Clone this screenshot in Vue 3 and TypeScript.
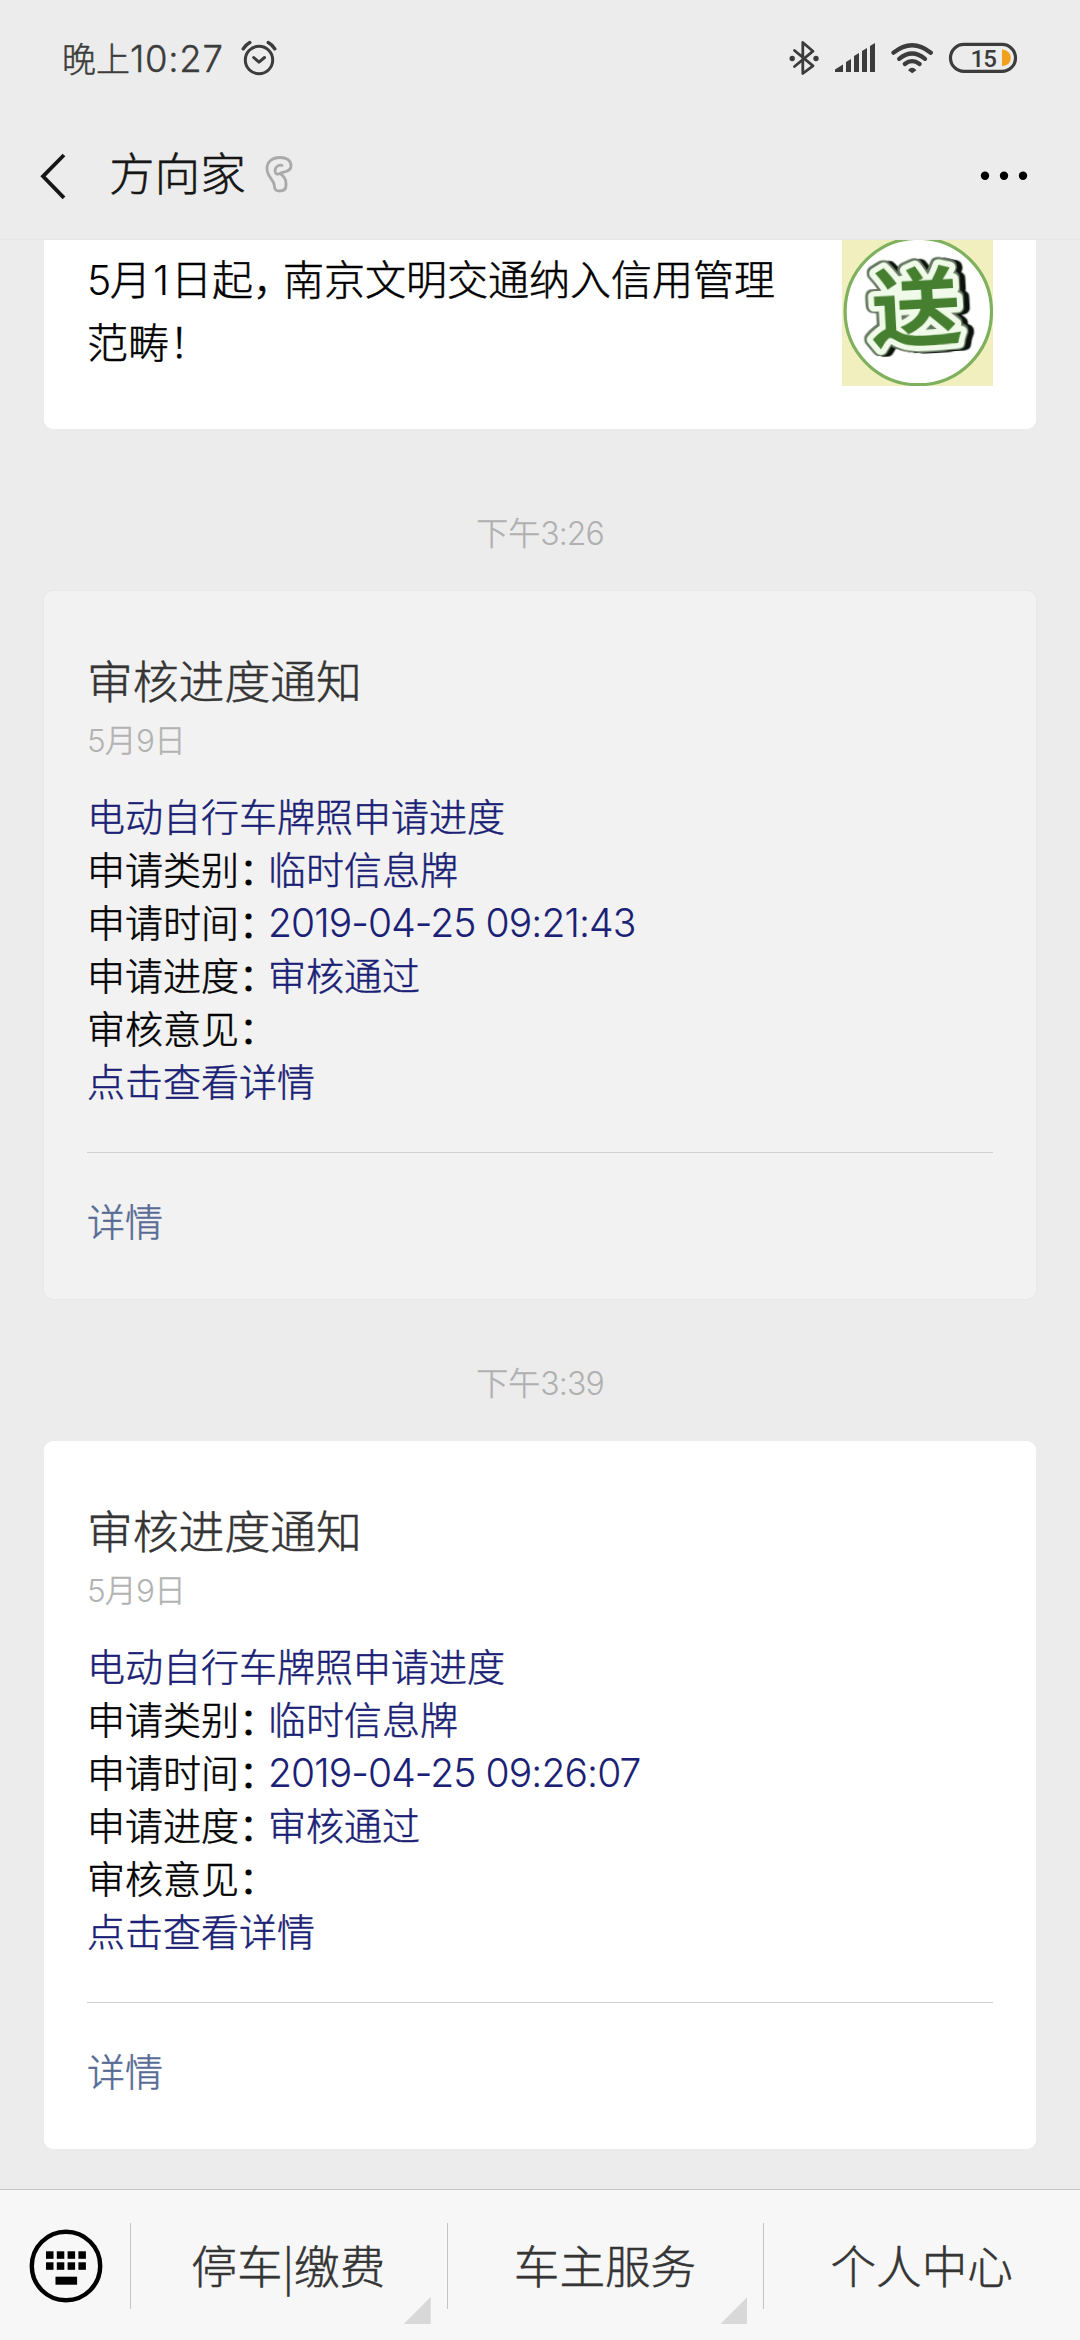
<script setup lang="ts">
interface Field {
  label: string
  value: string
  spacing?: boolean
}
interface Notice {
  time: string
  read: boolean
  title: string
  heading: string
  fields: Field[]
}

function makeNotice(time: string, read: boolean, applied: string): Notice {
  return {
    time,
    read,
    title: '审核进度通知',
    heading: '电动自行车牌照申请进度',
    fields: [
      { label: '申请类别', value: '临时信息牌' },
      { label: '申请时间', value: applied, spacing: true },
      { label: '申请进度', value: '审核通过' },
      { label: '审核意见', value: '' },
    ],
  }
}

const notices: Notice[] = [
  makeNotice('3:26', true, '2019-04-25 09:21:43'),
  makeNotice('3:39', false, '2019-04-25 09:26:07'),
]

const menus = [
  { label: '停车|缴费', sub: true },
  { label: '车主服务', sub: true },
  { label: '个人中心', sub: false },
]

const keyColumns = [45.5, 56.3, 67.1, 77.9]
</script>

<template>
  <div class="screen">
    <header class="top">
      <div class="status">
        <span class="clock">晚上<span class="num clock-digits">10:27</span></span>
        <svg class="alarm" width="36" height="36" viewBox="241 40 36 36" fill="none" stroke="#3c3c3c" stroke-width="3" stroke-linecap="round">
          <circle cx="259" cy="60" r="13.7" />
          <path d="M253.7 57.5L259 62.2L264.5 57.5" stroke-linejoin="round" />
          <path d="M243.2 48.8Q245.5 45 249.8 42.6M274.8 48.8Q272.5 45 268.2 42.6" stroke-width="3.4" />
        </svg>
        <span class="grow"></span>
        <svg width="230" height="40" viewBox="788 38 230 40" fill="none" stroke="#3c3c3c" stroke-linecap="round" stroke-linejoin="round">
          <path d="M794.5 50.5L813 65.8L802.8 73.5V42.5L813 51.2L794.5 66.5" stroke-width="2.8" />
          <circle cx="792.2" cy="58.5" r="2.7" fill="#3c3c3c" stroke="none" />
          <circle cx="816" cy="58.5" r="2.7" fill="#3c3c3c" stroke="none" />
          <g fill="#3c3c3c" stroke="none">
            <path d="M835 72V69.5L843 64.5V72Z" />
            <path d="M846 72V62L851 59V72Z" />
            <path d="M854 72V56L859 53V72Z" />
            <path d="M862 72V51L867 48V72Z" />
            <path d="M870 72V46L875 43V72Z" />
          </g>
          <g stroke-width="4.3">
            <path d="M893.5 52.7Q912 37.8 930.8 52.7" />
            <path d="M899.2 58.8Q912 48.2 925 58.8" />
            <path d="M904.8 64Q912 58.2 919.6 64" />
          </g>
          <path d="M908 70.2Q912 65.4 916.4 70.2L912.2 73.2Z" fill="#3c3c3c" stroke="none" />
          <rect x="950.5" y="44.4" width="65" height="27" rx="13.5" stroke-width="3.2" />
          <path d="M1002 49.3Q1010.8 51 1010.8 58Q1010.8 65 1002 66.2Z" fill="#f0a21d" stroke="none" />
          <text class="level" x="970.5" y="66.6">15</text>
        </svg>
      </div>
      <div class="nav">
        <svg width="30" height="50" viewBox="38 150 30 50" fill="none" stroke="#161616" stroke-width="3.8">
          <path d="M64 154L43 175.3L64 196.8" />
        </svg>
        <h1>方向家</h1>
        <svg class="ear" width="30" height="40" viewBox="264 154 30 40" fill="none" stroke="#a9a9a9" stroke-width="2.8" stroke-linecap="round" stroke-linejoin="round">
          <path d="M282 165.3C278 164.6 274.8 167.3 275 171C275.2 174 277.5 175 280 173.4C283 171.5 291 172.2 291 166C291 160 286 157.5 280 157.5C272 157.5 267 162 267 168.5C267 177 273.5 179 274.2 185C274.5 189 275 191 279.5 191C284 191 286 189.5 286 185.5C286 181.5 286.3 180 284.3 177.8C283.2 176.2 281.5 174.6 280 173.4" />
        </svg>
        <span class="grow"></span>
        <svg width="50" height="20" viewBox="979 167 50 20" fill="#000">
          <circle cx="985" cy="176.8" r="4.2" />
          <circle cx="1004" cy="176.8" r="4.2" />
          <circle cx="1023" cy="176.8" r="4.2" />
        </svg>
      </div>
    </header>

    <main>
      <section class="article">
        <p><span class="num five">5</span>月<span class="num one">1</span>日起<span class="comma">，</span>南京文明交通纳入信用管理<br />范畴！</p>
        <svg width="151" height="146" viewBox="842 240 151 146">
          <rect x="842" y="240" width="151" height="146" fill="#f0efbd" />
          <circle cx="918.3" cy="311.5" r="73.2" fill="#fff" stroke="#7fb05e" stroke-width="3.2" />
          <g transform="translate(916 306) rotate(-3) scale(1.08 1.02)">
            <text class="gift" x="0" y="32">送</text>
          </g>
        </svg>
      </section>

      <template v-for="n in notices" :key="n.time">
        <div class="time">下午<span class="num time-digits">{{ n.time }}</span></div>
        <section class="card" :class="{ read: n.read }">
          <h2>{{ n.title }}</h2>
          <div class="date"><span class="num">5</span>月<span class="num">9</span>日</div>
          <div class="body">
            <div class="blue">{{ n.heading }}</div>
            <div v-for="f in n.fields" :key="f.label" class="field">
              <span>{{ f.label }}</span><span class="colon">：</span><span class="blue"><span :class="{ num: f.spacing, digits: f.spacing }">{{ f.value }}</span></span>
            </div>
            <div class="blue">点击查看详情</div>
          </div>
          <div class="more">详情</div>
        </section>
      </template>
    </main>

    <footer>
      <div class="keyboard">
        <svg width="76" height="76" viewBox="27.5 27.5 76 76">
          <circle cx="65.5" cy="65.5" r="34.2" fill="none" stroke="#000" stroke-width="4.4" />
          <g v-for="x in keyColumns" :key="x">
            <rect :x="x" y="50.8" width="7.5" height="7.5" />
            <rect :x="x" y="61.8" width="7.5" height="7.5" />
          </g>
          <rect x="55" y="76.2" width="21.6" height="8" />
        </svg>
      </div>
      <div v-for="m in menus" :key="m.label" class="menu">
        <span>{{ m.label }}</span>
        <i v-if="m.sub" class="corner"></i>
      </div>
    </footer>
  </div>
</template>

<style>
body {
  margin: 0;
  background: #ececec;
}
</style>

<style scoped>
.screen {
  width: 1080px;
  height: 2340px;
  display: flex;
  flex-direction: column;
  overflow: hidden;
  background: #ececec;
  color: #000;
  font-family: 'Noto Sans CJK SC', sans-serif;
  font-weight: 300;
  -webkit-text-stroke-width: 0.5px;
  white-space: nowrap;
}
svg {
  display: block;
  flex: none;
}
.grow {
  flex: 1;
}
.num {
  font-family: Inter, 'Noto Sans CJK SC', sans-serif;
  line-height: 1;
  -webkit-text-stroke-width: 0;
}
.top {
  height: 240px;
  flex: none;
  box-sizing: border-box;
  border-bottom: 1px solid #e6e6e6;
}
.status {
  height: 116px;
  box-sizing: border-box;
  display: flex;
  align-items: center;
  padding: 0 62px;
  color: #3c3c3c;
}
.clock {
  font-size: 34px;
  line-height: 50px;
  width: 179px;
}
.clock-digits {
  font-size: 36.5px;
  letter-spacing: 0.7px;
  -webkit-text-stroke-width: 0.4px;
}
.level {
  font-family: Roboto, sans-serif;
  font-size: 24px;
  font-weight: 500;
  letter-spacing: -1px;
  fill: #3c3c3c;
  stroke: none;
}
.nav {
  height: 119px;
  display: flex;
  align-items: center;
  padding: 0 51px 0 38px;
}
h1,
h2,
p {
  margin: 0;
  font-weight: 300;
}
h1 {
  font-size: 45.6px;
  line-height: 60px;
  margin: -9px 0 0 41px;
  color: #161616;
}
.ear {
  margin-left: 18px;
  margin-top: -3px;
}
main {
  height: 1949px;
  flex: none;
  padding: 0 44px;
  box-sizing: border-box;
}
.article {
  height: 189px;
  box-sizing: border-box;
  padding: 0 43px;
  display: flex;
  justify-content: space-between;
  background: #fff;
  border-radius: 0 0 9px 9px;
}
.article p {
  padding-top: 6px;
  font-size: 41px;
  line-height: 62.5px;
}
.five {
  display: inline-block;
  width: 23px;
  letter-spacing: -2px;
}
.one {
  display: inline-block;
  width: 20px;
  text-align: center;
}
.comma {
  display: inline-block;
  width: 30px;
  font-feature-settings: 'halt';
}
.gift {
  font-size: 84px;
  font-weight: 700;
  text-anchor: middle;
  fill: #477f31;
  stroke: #effbe8;
  stroke-width: 11px;
  stroke-linejoin: round;
  paint-order: stroke;
  filter: drop-shadow(1.2px 0 0 #667862) drop-shadow(-1.2px 0 0 #667862) drop-shadow(0 1.2px 0 #667862) drop-shadow(0 -1.2px 0 #667862) drop-shadow(5px 1px 0.5px #0b110b);
}
.time {
  height: 44px;
  margin: 60px 0 38px;
  line-height: 44px;
  text-align: center;
  font-size: 32px;
  color: #b0b0b0;
}
.article + .time {
  margin-top: 80px;
}
.time-digits {
  letter-spacing: -0.9px;
}
.card {
  height: 708px;
  box-sizing: border-box;
  padding: 58px 43px 0;
  background: #fff;
  border-radius: 9px;
  display: flex;
  flex-direction: column;
}
.card.read {
  background: #f2f2f2;
  box-shadow: 0 0 0 1px #e8e8e8;
}
.card h2 {
  font-size: 45.8px;
  line-height: 60px;
  color: #353535;
}
.date {
  margin-top: 7px;
  font-size: 31.5px;
  line-height: 44px;
  letter-spacing: -0.6px;
  color: #b2b2b2;
}
.body {
  margin-top: 28px;
  font-size: 38px;
  line-height: 53.1px;
}
.field {
  display: flex;
}
.colon {
  width: 29px;
  font-feature-settings: 'halt';
  -webkit-text-stroke-width: 1.2px;
}
.blue {
  color: #1b1f75;
}
.digits {
  font-size: 39px;
  letter-spacing: -0.9px;
  -webkit-text-stroke-width: 0.1px;
}
.more {
  margin-top: 45px;
  border-top: 1px solid #d0d0d0;
  padding-top: 40px;
  font-size: 38px;
  line-height: 54px;
  color: #576b95;
}
footer {
  flex: 1;
  box-sizing: border-box;
  display: flex;
  border-top: 1px solid #c6c6c6;
  background: #f7f7f7;
}
.keyboard {
  width: 130px;
  padding: 38px 0 0 27.5px;
  box-sizing: border-box;
}
.menu {
  flex: 1;
  position: relative;
  text-align: center;
  font-size: 45.6px;
  line-height: 60px;
  padding-top: 44px;
  color: #353535;
}
.menu::before {
  content: '';
  position: absolute;
  left: 0;
  top: 33px;
  width: 1px;
  height: 86px;
  background: #c4c4c4;
}
.corner {
  position: absolute;
  right: 16px;
  bottom: 16px;
  width: 27px;
  height: 27px;
  background: #d8d8d8;
  clip-path: polygon(100% 0, 100% 100%, 0 100%);
}
</style>
